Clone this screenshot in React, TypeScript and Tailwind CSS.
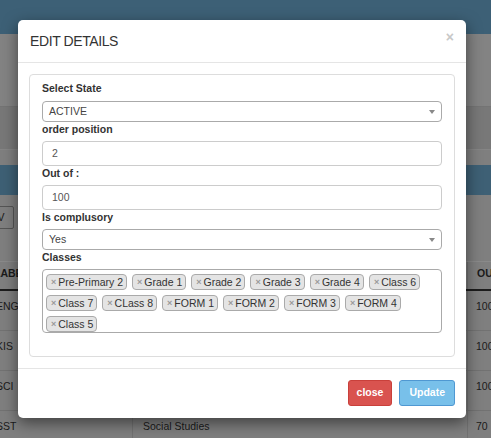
import React from 'react';

const classes = [
  'Pre-Primary 2',
  'Grade 1',
  'Grade 2',
  'Grade 3',
  'Grade 4',
  'Class 6',
  'Class 7',
  'CLass 8',
  'FORM 1',
  'FORM 2',
  'FORM 3',
  'FORM 4',
  'Class 5',
];

const rows = [
  { code: 'ENG', name: 'English', out: '100' },
  { code: 'KIS', name: 'Kiswahili', out: '100' },
  { code: 'SCI', name: 'Science', out: '100' },
  { code: 'SST', name: 'Social Studies', out: '70' },
];

function Label({ children, first }: { children: React.ReactNode; first?: boolean }) {
  return (
    <div className={`text-[10.5px] font-bold leading-[15px] text-[#333] ${first ? 'mb-[5px]' : 'mb-[4px]'}`}>
      {children}
    </div>
  );
}

function SelectBox({ value }: { value: string }) {
  return (
    <div className="flex h-[21px] items-center justify-between rounded-[4px] border border-[#aaa] bg-white pl-[6px] pr-[6px] text-[10.5px] text-[#444]">
      <span>{value}</span>
      <span className="h-0 w-0 border-x-[3px] border-t-[4px] border-x-transparent border-t-[#888]" />
    </div>
  );
}

function TextBox({ value }: { value: string }) {
  return (
    <div className="flex h-[25px] items-center rounded-[4px] border border-[#ccc] bg-white pl-[9px] text-[10.5px] text-[#555]">
      {value}
    </div>
  );
}

function Tag({ name }: { name: string }) {
  return (
    <span className="flex h-[16px] items-center rounded-[4px] border border-[#aaa] bg-[#e4e4e4] pl-[4px] pr-[3px] text-[10.5px] leading-[14px] text-[#333]">
      <span className="mr-[2px] text-[9px] font-bold text-[#999]">×</span>
      {name}
    </span>
  );
}

function EditModal() {
  return (
    <div className="absolute left-[18px] top-[20px] w-[448px] rounded-[5px] bg-white shadow-[0_5px_15px_rgba(0,0,0,0.5)]">
      <div className="flex h-[43px] items-center justify-between border-b border-[#e5e5e5] pl-[12px] pr-[12px]">
        <span className="text-[14px] tracking-[-0.4px] text-[#333]">EDIT DETAILS</span>
        <span className="-mt-[7px] text-[14px] font-bold text-[#c8c8c8]">×</span>
      </div>

      <div className="px-[11px] py-[11px]">
        <div className="rounded-[4px] border border-[#ddd] px-[12px] pb-[23px] pt-[6px]">
          <Label first>Select State</Label>
          <SelectBox value="ACTIVE" />
          <Label>order position</Label>
          <TextBox value="2" />
          <Label>Out of :</Label>
          <TextBox value="100" />
          <Label>Is complusory</Label>
          <SelectBox value="Yes" />
          <Label>Classes</Label>
          <div className="flex h-[64px] flex-wrap content-start gap-x-[5px] gap-y-[5px] rounded-[4px] border border-[#aaa] pl-[3px] pt-[4px]">
            {classes.map((c) => (
              <Tag key={c} name={c} />
            ))}
          </div>
        </div>
      </div>

      <div className="flex justify-end gap-[7px] border-t border-[#e5e5e5] pb-[12px] pr-[11px] pt-[11px]">
        <button className="h-[26px] rounded-[3px] border border-[#c9403b] bg-[#d9534f] px-[8px] text-[10.5px] font-bold text-white">
          close
        </button>
        <button className="h-[26px] rounded-[3px] border border-[#4f98d2] bg-[#78c0ea] px-[9px] text-[10.5px] font-bold text-white">
          Update
        </button>
      </div>
    </div>
  );
}

export default function App() {
  return (
    <div className="relative h-[438px] w-[491px] overflow-hidden bg-[#7f7f7f] font-['Liberation_Sans',Arial,sans-serif]">
      {/* dimmed page behind the modal */}
      <div className="h-[34px] bg-[#3d6076] shadow-[0_1px_2px_rgba(0,0,0,0.35)]" />
      <div className="h-[73px] border-b border-[#747474] bg-[#838383]" />
      <div className="h-[43px] border-b border-[#858585] bg-[#787878]" />
      <div className="h-[15px]" />
      <div className="h-[30px] bg-[#3e6075]" />

      <div className="-ml-[26px] mt-[11px] flex gap-[4px]">
        {['CSV', 'Excel', 'PDF', 'Print'].map((b) => (
          <div
            key={b}
            className="flex h-[23px] shrink-0 items-center rounded-[2px] border border-[#555] px-[8px] text-[10.5px] text-[#1a1a1a]"
          >
            {b}
          </div>
        ))}
      </div>

      <div className="mt-[32px] w-[600px] text-[10.5px] text-[#1a1a1a]">
        <div className="flex h-[30px] border-b-2 border-t border-b-[#1c1c1c] border-t-[#8a8a8a] font-bold">
          <div className="-ml-[14px] flex w-[146px] shrink-0 items-end pb-[7px] pl-[8px]">LABEL</div>
          <div className="w-[335px] shrink-0 border-l border-[#727272]" />
          <div className="flex w-[80px] shrink-0 items-end whitespace-nowrap border-l border-[#727272] pb-[7px] pl-[9px]">
            OUT OF
          </div>
        </div>
        {rows.map((r) => (
          <div key={r.code} className="flex h-[40px] border-b border-[#727272]">
            <div className="-ml-[14px] w-[146px] shrink-0 pl-[10px] pt-[8px]">{r.code}</div>
            <div className="w-[335px] shrink-0 border-l border-[#727272] pl-[10px] pt-[8px]">{r.name}</div>
            <div className="w-[80px] shrink-0 border-l border-[#727272] pl-[8px] pt-[8px] text-[#1a1a1a]">{r.out}</div>
          </div>
        ))}
      </div>

      <EditModal />
    </div>
  );
}
